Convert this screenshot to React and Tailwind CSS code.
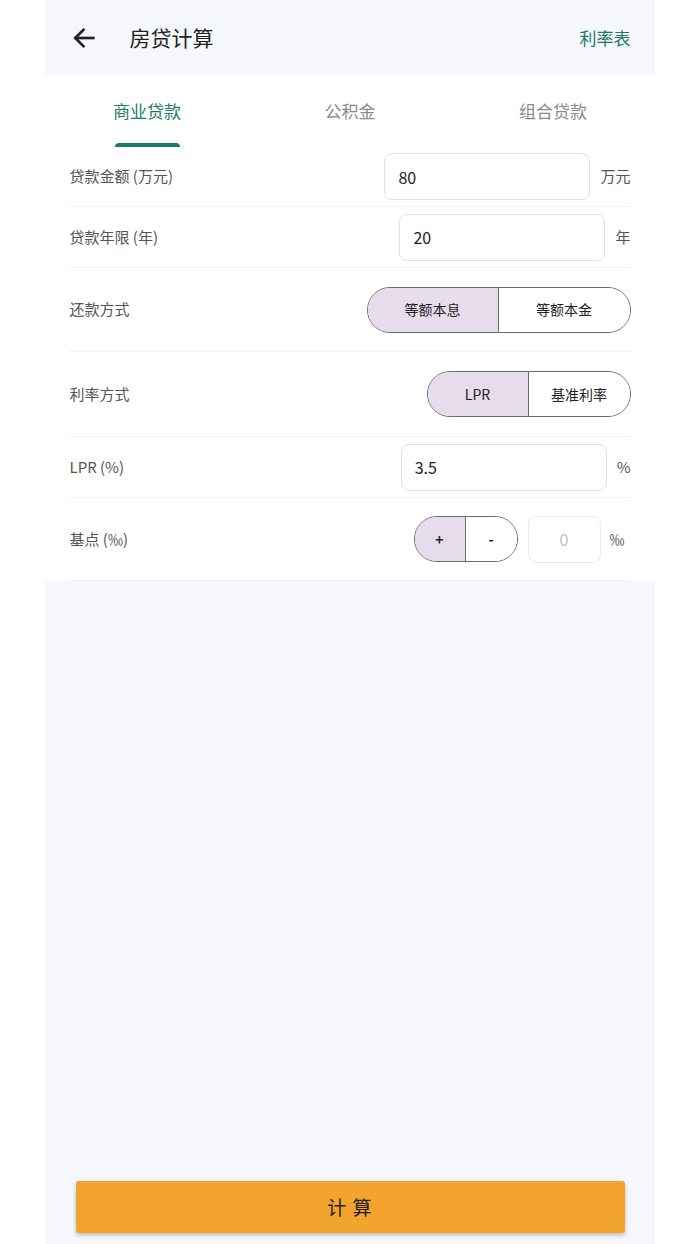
import React, { useState } from 'react';

const font = { fontFamily: '"Noto Sans CJK SC", "Noto Sans", Roboto, sans-serif' };

const tabs = ['商业贷款', '公积金', '组合贷款'];

const InputRow = ({ label, value, unit, h }) => (
    <div className={'flex items-center justify-between border-b border-[#f0f1f3] ' + h}>
        <span className="text-[15px] text-[#555]">{label}</span>
        <div className="flex items-center gap-[10px]">
            <div className="w-[206px] h-[47px] rounded-lg border-[1.5px] border-[#e1e1e1] flex items-center px-[13px] text-[16px] text-[#222]">
                {value}
            </div>
            <span className="text-[15px] text-[#555]">{unit}</span>
        </div>
    </div>
);

const Segmented = ({ options, widths, bold }) => (
    <div className="flex h-[46px] rounded-full border-[1.5px] border-[#6e6a72] overflow-hidden">
        {options.map((opt, i) => (
            <div
                key={opt}
                className={
                    'flex items-center justify-center text-[14px] text-[#222] ' +
                    (bold ? 'font-bold ' : '') +
                    (i === 0 ? 'bg-[#e6dcec] border-r-[1.5px] border-[#6e6a72]' : 'bg-white')
                }
                style={{ width: widths[i] }}
            >
                {opt}
            </div>
        ))}
    </div>
);

const SegmentRow = ({ label, options, widths, h }) => (
    <div className={'flex items-center justify-between border-b border-[#f0f1f3] ' + h}>
        <span className="text-[15px] text-[#555]">{label}</span>
        <Segmented options={options} widths={widths} />
    </div>
);

const App = () => {
    const [tab, setTab] = useState(0);

    return (
        <div className="w-full bg-white" style={font}>
            <div className="mx-auto w-[609px] min-h-[1244px] bg-[#f5f7fa] flex flex-col">
                {/* header */}
                <div className="h-[75px] flex items-center pl-[24px] pr-[24px]">
                    <svg width="28" height="28" viewBox="0 0 24 24" fill="none" stroke="#222" strokeWidth="2.3" strokeLinecap="square">
                        <path d="M20 12H5" />
                        <path d="M11.5 5L4.5 12l7 7" />
                    </svg>
                    <span className="ml-[32px] text-[21px] text-[#222]">房贷计算</span>
                    <span className="ml-auto text-[17px] text-[#1b7a69]">利率表</span>
                </div>

                {/* panel */}
                <div className="bg-white">
                    <div className="flex h-[72px]">
                        {tabs.map((t, i) => (
                            <button
                                key={t}
                                onClick={() => setTab(i)}
                                className="flex-1 flex flex-col items-center justify-end"
                            >
                                <span className={'text-[17px] ' + (tab === i ? 'text-[#1b7a69]' : 'text-[#8a8a8a]')}>{t}</span>
                                <span
                                    className={
                                        'mt-[20px] w-[65px] h-[4px] rounded-t-full ' +
                                        (tab === i ? 'bg-[#1b7a69]' : 'bg-transparent')
                                    }
                                />
                            </button>
                        ))}
                    </div>

                    <div className="px-[24px]">
                        <InputRow label="贷款金额 (万元)" value="80" unit="万元" h="h-[60px]" />
                        <InputRow label="贷款年限 (年)" value="20" unit="年" h="h-[61px]" />
                        <SegmentRow label="还款方式" options={['等额本息', '等额本金']} widths={[131, 131]} h="h-[84px]" />
                        <SegmentRow label="利率方式" options={['LPR', '基准利率']} widths={[101, 101]} h="h-[85px]" />
                        <InputRow label="LPR (%)" value="3.5" unit="%" h="h-[61px]" />
                        <div className="flex items-center justify-between h-[83px] border-b border-[#f0f1f3]">
                            <span className="text-[15px] text-[#555]">基点 (‰)</span>
                            <div className="flex items-center">
                                <Segmented options={['+', '-']} widths={[51, 51]} bold />
                                <div className="ml-[10px] w-[73px] h-[47px] rounded-lg border-[1.5px] border-[#ebebeb] flex items-center justify-center text-[16px] text-[#bdbdbd]">
                                    0
                                </div>
                                <span className="ml-[9px] w-[21px] text-[15px] text-[#555]">‰</span>
                            </div>
                        </div>
                    </div>
                </div>

                <div className="flex-1" />

                <div className="px-[30px] pb-[11px]">
                    <button className="w-full h-[52px] rounded-[3px] bg-[#f2a330] shadow-[0_2px_4px_rgba(0,0,0,0.25)] text-[19px] text-[#222] tracking-[1px]">
                        计 算
                    </button>
                </div>
            </div>
        </div>
    );
};

export default App;
